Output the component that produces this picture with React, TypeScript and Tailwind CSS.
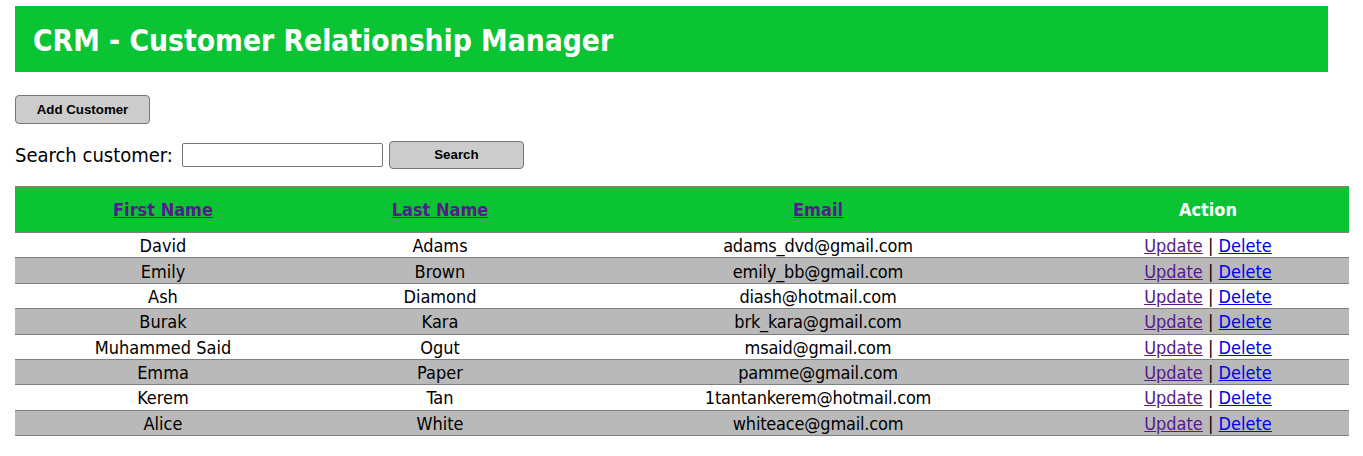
import React from "react";

const customers = [
  { first: "David", last: "Adams", email: "adams_dvd@gmail.com" },
  { first: "Emily", last: "Brown", email: "emily_bb@gmail.com" },
  { first: "Ash", last: "Diamond", email: "diash@hotmail.com" },
  { first: "Burak", last: "Kara", email: "brk_kara@gmail.com" },
  { first: "Muhammed Said", last: "Ogut", email: "msaid@gmail.com" },
  { first: "Emma", last: "Paper", email: "pamme@gmail.com" },
  { first: "Kerem", last: "Tan", email: "1tantankerem@hotmail.com" },
  { first: "Alice", last: "White", email: "whiteace@gmail.com" },
];

const cols = "grid grid-cols-[296px_258px_498px_282px]";

const App = () => {
  return (
    <div className="w-[1363px] min-h-[456px] bg-white text-black font-['DejaVu_Sans_Condensed','DejaVu_Sans',sans-serif]">
      <div className="pl-[15px] pt-[6px]">
        <div className="w-[1313px] h-[66px] bg-[#0bc434] flex items-center px-[18px] pt-[4px]">
          <h1 className="text-white font-bold text-[29.7px]">
            CRM - Customer Relationship Manager
          </h1>
        </div>

        <button className="mt-[23px] w-[135px] h-[29px] bg-[#cccccc] border border-[#777] rounded-[4px] text-[13.3px] font-bold font-['Liberation_Sans',sans-serif]">
          Add Customer
        </button>

        <div className="mt-[16px] flex items-center h-[29px]">
          <span className="text-[20px]">Search customer:</span>
          <input
            type="text"
            className="ml-[9px] w-[201px] h-[24px] border border-[#767676] rounded-[2px] bg-white"
          />
          <button className="ml-[6px] w-[135px] h-[28px] bg-[#cccccc] border border-[#777] rounded-[4px] text-[13.3px] font-bold font-['Liberation_Sans',sans-serif]">
            Search
          </button>
        </div>

        <div className="mt-[17px] w-[1334px] text-[18px]">
          <div className={`${cols} h-[47px] bg-[#0bc434] border-y border-[#808080] items-center text-center font-bold`}>
            <a href="#" className="text-[#551a8b] underline">First Name</a>
            <a href="#" className="text-[#551a8b] underline">Last Name</a>
            <a href="#" className="text-[#551a8b] underline">Email</a>
            <span className="text-white">Action</span>
          </div>
          {customers.map((c, i) => (
            <div
              key={c.email}
              className={`${cols} h-[25.375px] border-b border-[#808080] items-center text-center leading-none pt-[2px] ${
                i % 2 === 1 ? "bg-[#b9b9b9]" : "bg-white"
              }`}
            >
              <span>{c.first}</span>
              <span>{c.last}</span>
              <span className="tracking-[-0.2px]">{c.email}</span>
              <span>
                <a href="#" className="text-[#551a8b] underline">Update</a>
                {" | "}
                <a href="#" className="text-[#0000ee] underline">Delete</a>
              </span>
            </div>
          ))}
        </div>
      </div>
    </div>
  );
};

export default App;
